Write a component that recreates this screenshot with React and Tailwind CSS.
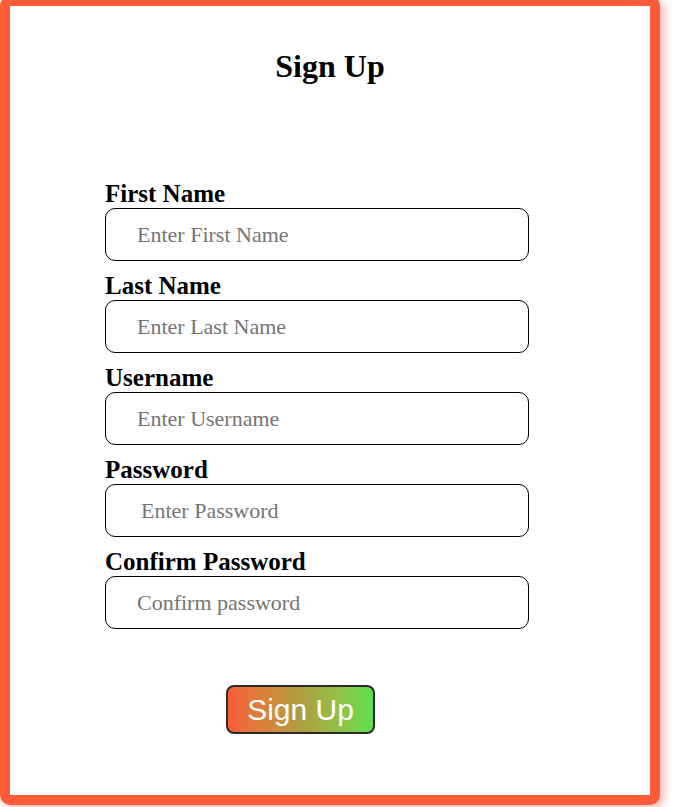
import React from 'react';

const fields = [
  { id: 'first', label: 'First Name', placeholder: 'Enter First Name', type: 'text' },
  { id: 'last', label: 'Last Name', placeholder: 'Enter Last Name', type: 'text' },
  { id: 'user', label: 'Username', placeholder: 'Enter Username', type: 'text' },
  { id: 'pass', label: 'Password', placeholder: 'Enter Password', type: 'password' },
  { id: 'confirm', label: 'Confirm Password', placeholder: 'Confirm password', type: 'password' },
];

function App() {
  return (
    <div className="h-[807px] overflow-hidden bg-white font-['Liberation_Serif',serif]">
      <div className="-mt-[4px] h-[809px] w-[660px] rounded-[10px] border-[10px] border-[#fe5c38] bg-white shadow-[4px_3px_10px_rgba(255,90,90,0.45)]">
        {/* Title */}
        <h1 className="pt-[42px] text-center text-[32px] font-bold leading-[37px] text-black">
          Sign Up
        </h1>

        {/* Form */}
        <form className="ml-[95px] mt-[94px] w-[424px]" onSubmit={(e) => e.preventDefault()}>
          {fields.map((f) => (
            <div key={f.id} className="mb-[10px]">
              <label htmlFor={f.id} className="block text-[25px] font-bold leading-[29px] text-black">
                {f.label}
              </label>
              <input
                id={f.id}
                type={f.type}
                placeholder={f.placeholder}
                className={
                  'block h-[53px] w-[424px] rounded-[10px] border border-black bg-white pr-3 text-[22px] text-black outline-none placeholder:text-[#757575] ' +
                  (f.id === 'pass' ? 'pl-[35px]' : 'pl-[31px]')
                }
              />
            </div>
          ))}

          <button
            type="submit"
            className="ml-[121px] mt-[56px] flex h-[49px] w-[149px] items-center justify-center rounded-[8px] border-2 border-[#2b2b2b] bg-gradient-to-r from-[#f95c39] via-[#b09c40] to-[#58df4f] font-['Liberation_Sans',sans-serif] text-[30px] leading-none text-white"
          >
            Sign Up
          </button>
        </form>
      </div>
    </div>
  );
}

export default App;
